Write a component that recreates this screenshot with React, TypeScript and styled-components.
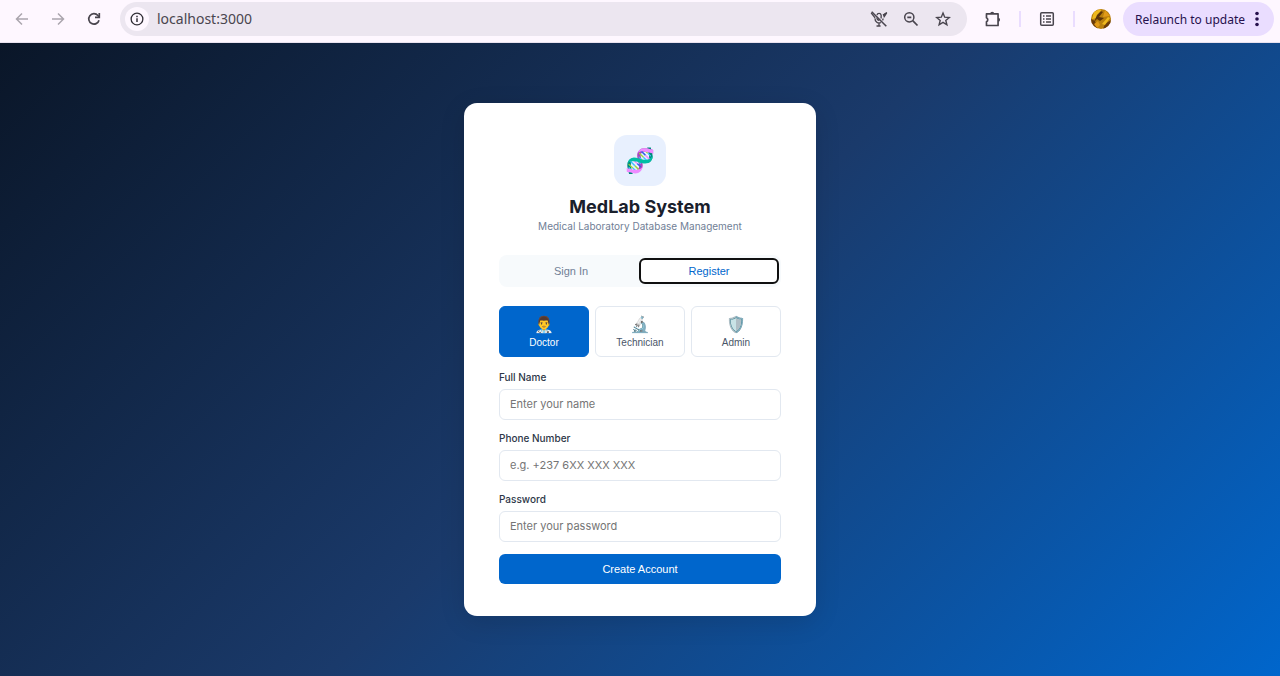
import React, { useState } from "react";
import styled, { createGlobalStyle } from "styled-components";

const GlobalStyle = createGlobalStyle`
  * { box-sizing: border-box; }
  html, body, #root { height: 100%; }
  body { margin: 0; font-family: Inter, sans-serif; }
  button, input { font: inherit; margin: 0; }
`;

const Page = styled.div`
  min-height: 100%;
  display: flex;
  flex-direction: column;
`;

const Toolbar = styled.header`
  display: flex;
  align-items: center;
  height: 43px;
  padding: 0 6px 4px 9px;
  background: #fef7ff;
  border-bottom: 1px solid #e9e2ef;
  color: #49454e;
  font-family: "Noto Sans", sans-serif;
`;

const IconButton = styled.button<{ $size?: number; $muted?: boolean }>`
  display: flex;
  align-items: center;
  justify-content: center;
  flex: none;
  width: ${(p) => p.$size ?? 32}px;
  height: 28px;
  padding: 0;
  border: 0;
  background: none;
  color: ${(p) => (p.$muted ? "#aba5ae" : "inherit")};
`;

const NavGroup = styled.nav`
  display: flex;
  gap: 10px;
  width: 111px;
  flex: none;
`;

const AddressBar = styled.div`
  display: flex;
  align-items: center;
  flex: 1;
  min-width: 0;
  height: 34px;
  padding: 0 8px 0 5px;
  border-radius: 17px;
  background: #ece6f0;
`;

const SiteInfo = styled.button`
  display: flex;
  align-items: center;
  justify-content: center;
  flex: none;
  width: 24px;
  height: 24px;
  padding: 0;
  border: 0;
  border-radius: 50%;
  background: #fef7ff;
  color: #322f37;
`;

const Url = styled.input`
  flex: 1;
  min-width: 0;
  padding: 0 8px;
  border: 0;
  background: none;
  outline: 0;
  color: #49454e;
  font-size: 14px;
  line-height: 20px;
`;

const Extensions = styled.div`
  display: flex;
  align-items: center;
  flex: none;
  padding: 0 6px 0 10px;
`;

const Separator = styled.span`
  width: 2px;
  height: 16px;
  margin: 0 10px;
  background: #eaddff;
`;

const Relaunch = styled.button`
  display: flex;
  align-items: center;
  gap: 9px;
  flex: none;
  height: 34px;
  padding: 0 14px 0 12px;
  border: 0;
  border-radius: 17px;
  background: #eaddff;
  color: #26104d;
  font-size: 12px;
  white-space: nowrap;
`;

const Backdrop = styled.main`
  flex: 1;
  display: flex;
  align-items: center;
  justify-content: center;
  padding: 32px 16px;
  background: linear-gradient(135deg, #0a1628 0%, #1a3a6b 50%, #0066cc 100%);
`;

const Card = styled.section`
  width: 100%;
  max-width: 352px;
  padding: 32px 35px;
  border-radius: 13px;
  background: #fff;
  box-shadow: 0 6px 26px rgba(0, 0, 0, 0.12);
`;

const Brand = styled.header`
  display: flex;
  flex-direction: column;
  align-items: center;
  margin-bottom: 22px;
`;

const Logo = styled.div`
  display: flex;
  align-items: center;
  justify-content: center;
  width: 52px;
  height: 51px;
  margin-bottom: 9px;
  border-radius: 13px;
  background: #e8f0fe;
  font-size: 24px;
  line-height: 28px;
`;

const Title = styled.h1`
  margin: 0;
  color: #1a202c;
  font-size: 18px;
  font-weight: 700;
  line-height: 24px;
`;

const Subtitle = styled.p`
  margin: 0;
  color: #718096;
  font-size: 10px;
  line-height: 14px;
`;

const Tabs = styled.div`
  display: grid;
  grid-template-columns: 1fr 1fr;
  margin-bottom: 19px;
  padding: 4px 3px;
  border-radius: 8px;
  background: #f7fafc;
`;

const Tab = styled.button<{ $active: boolean }>`
  height: 24px;
  padding: 0;
  border: 0;
  outline: ${(p) => (p.$active ? "2px solid #101010" : "0")};
  outline-offset: -1px;
  border-radius: 5px;
  background: ${(p) => (p.$active ? "#fff" : "none")};
  color: ${(p) => (p.$active ? "#0066cc" : "#718096")};
  font-family: "Liberation Sans", Arial, sans-serif;
  font-size: 11px;
`;

const Roles = styled.div`
  display: grid;
  grid-template-columns: repeat(3, 1fr);
  gap: 6px;
  margin-bottom: 13px;
`;

const Role = styled.button<{ $active: boolean }>`
  display: flex;
  flex-direction: column;
  align-items: center;
  gap: 1px;
  height: 51px;
  padding: 8px 0 0;
  border: 1px solid ${(p) => (p.$active ? "#0066cc" : "#e2e8f0")};
  border-radius: 6px;
  background: ${(p) => (p.$active ? "#0066cc" : "#fff")};
  color: ${(p) => (p.$active ? "#fff" : "#4a5568")};
  font-family: "Liberation Sans", Arial, sans-serif;
  font-size: 10px;
  line-height: 14px;
`;

const RoleIcon = styled.span`
  font-size: 16px;
  line-height: 20px;
`;

const Field = styled.div`
  display: flex;
  flex-direction: column;
  gap: 5px;
  margin-bottom: 11px;
`;

const Label = styled.label`
  color: #2d3748;
  font-size: 10px;
  font-weight: 500;
  line-height: 14px;
`;

const TextInput = styled.input`
  width: 100%;
  height: 31px;
  padding: 0 10px 2px;
  border: 1px solid #e2e8f0;
  border-radius: 6px;
  background: #fff;
  font-size: 11px;
  &::placeholder { color: #757575; opacity: 1; }
`;

const Submit = styled.button`
  display: block;
  width: 100%;
  height: 30px;
  margin-top: 12px;
  border: 0;
  border-radius: 6px;
  background: #0066cc;
  color: #fff;
  font-family: "Liberation Sans", Arial, sans-serif;
  font-size: 11px;
`;

const Svg = ({ size = 16, children }: { size?: number; children: React.ReactNode }) => (
  <svg width={size} height={size} viewBox="0 0 16 16" fill="none" stroke="currentColor" strokeWidth="1.5" aria-hidden="true">
    {children}
  </svg>
);

const roles = [
  { name: "Doctor", icon: "👨‍⚕️" },
  { name: "Technician", icon: "🔬" },
  { name: "Admin", icon: "🛡️" },
];

const fields = [
  { id: "name", label: "Full Name", type: "text", hint: "Enter your name" },
  { id: "phone", label: "Phone Number", type: "tel", hint: "e.g. +237 6XX XXX XXX" },
  { id: "password", label: "Password", type: "password", hint: "Enter your password" },
];

export default function App() {
  const [tab, setTab] = useState("Register");
  const [role, setRole] = useState("Doctor");
  return (
    <Page>
      <GlobalStyle />
      <Toolbar>
        <NavGroup>
          <IconButton $size={26} $muted aria-label="Back"><Svg><path d="M14 8H3M8 2.500 2.500 8 8 13.500" /></Svg></IconButton>
          <IconButton $size={26} $muted aria-label="Forward"><Svg><path d="M2 8h11M8 2.500 13.500 8 8 13.500" /></Svg></IconButton>
          <IconButton $size={26} aria-label="Reload"><Svg><path d="M13 9.200A5.200 5.200 0 1 1 11.900 4.500L13 5.600" strokeWidth="1.700" /><path d="M13.300 2v4.300H9" strokeWidth="1.700" /></Svg></IconButton>
        </NavGroup>
        <AddressBar>
          <SiteInfo aria-label="Site information">
            <Svg size={14}><circle cx="8" cy="8" r="6.700" /><path d="M8 7.200v4.300M8 4.300v1.600" strokeWidth="1.700" /></Svg>
          </SiteInfo>
          <Url aria-label="Address" defaultValue="localhost:3000" />
          <IconButton aria-label="Microphone blocked">
            <Svg size={18}>
              <path d="M1.500 1.500l13 13" strokeWidth="1.400" />
              <path d="M1 2.500l3.500 4.500M15 2.200l-3.300 2.600M14.800 2.500l-2.600 4M6.200 4.500a1.900 1.900 0 0 1 3.700 0v3M4.500 7.500a3.600 3.600 0 0 0 5.200 3.600M11.600 7.500a3.600 3.600 0 0 1-.5 1.800M8 11.500v2.500M5.800 14.200h3.600M6.200 7a1.900 1.900 0 0 0 2 2.100" strokeWidth="1.200" />
              <path d="M15 2l-3.800 2 1.500 2z" fill="currentColor" stroke="none" />
            </Svg>
          </IconButton>
          <IconButton aria-label="Zoom">
            <Svg><circle cx="6.300" cy="6.300" r="4.600" /><path d="M9.700 9.700l4.800 4.800M4.300 6.300h4" strokeWidth="1.700" /></Svg>
          </IconButton>
          <IconButton aria-label="Bookmark">
            <Svg><path d="M8 2l1.700 4.200 4.600.3-3.500 2.900 1.100 4.400L8 11.400l-3.900 2.400 1.100-4.400L1.700 6.500l4.600-.3z" strokeWidth="1.400" /></Svg>
          </IconButton>
        </AddressBar>
        <Extensions>
          <IconButton aria-label="Extensions">
            <Svg size={18}>
              <path d="M2.200 3.400h10.300v10.400H2.200v-3.400a2 2 0 0 0 0-3.600z" strokeLinejoin="round" />
              <path d="M5.500 3.400a1.800 1.800 0 0 1 3.600 0zM12.500 6.800a1.800 1.800 0 0 1 0 3.600z" fill="currentColor" stroke="none" />
            </Svg>
          </IconButton>
          <Separator />
          <IconButton aria-label="Reading list">
            <Svg><rect x="1.700" y="1.700" width="12.600" height="12.600" rx="1" /><path d="M4 5h1.500M4 8h1.500M4 11h1.500M7 5h5M7 8h5M7 11h5" /></Svg>
          </IconButton>
          <Separator />
          <IconButton aria-label="Profile">
            <svg width="20" height="20" viewBox="0 0 20 20" aria-hidden="true">
              <defs><clipPath id="avatar"><circle cx="10" cy="10" r="10" /></clipPath></defs>
              <g clipPath="url(#avatar)">
                <path fill="#b87f0c" d="M0 0h20v20H0z" />
                <path fill="#6b3c08" d="M0 10l4 2 3 8H0zM12 20l2-5 6-4v9z" />
                <path fill="#eeb81c" d="M3 3l6-3 2 3-5 6-5 1zM11 15l6-7 2 1-5 7z" />
                <path fill="#5c3408" d="M10 2l2 1-4 5 5 1-4 3-3-2-3 3 3-7z" />
                <path fill="#e09a18" d="M14 1l5 6-7 1zM3 15l4-3 2 4-3 3z" />
              </g>
            </svg>
          </IconButton>
        </Extensions>
        <Relaunch>
          Relaunch to update
          <svg width="6" height="16" viewBox="0 0 6 16" fill="currentColor" aria-hidden="true">
            <circle cx="3" cy="2.500" r="1.800" /><circle cx="3" cy="8" r="1.800" /><circle cx="3" cy="13.500" r="1.800" />
          </svg>
        </Relaunch>
      </Toolbar>
      <Backdrop>
        <Card>
          <Brand>
            <Logo>🧬</Logo>
            <Title>MedLab System</Title>
            <Subtitle>Medical Laboratory Database Management</Subtitle>
          </Brand>
          <Tabs role="tablist">
            {["Sign In", "Register"].map((name) => (
              <Tab key={name} role="tab" aria-selected={tab === name} $active={tab === name} onClick={() => setTab(name)}>{name}</Tab>
            ))}
          </Tabs>
          <Roles>
            {roles.map((r) => (
              <Role key={r.name} $active={role === r.name} aria-pressed={role === r.name} onClick={() => setRole(r.name)}>
                <RoleIcon>{r.icon}</RoleIcon>
                {r.name}
              </Role>
            ))}
          </Roles>
          <form onSubmit={(e) => e.preventDefault()}>
            {fields.map((f) => (
              <Field key={f.id}>
                <Label htmlFor={f.id}>{f.label}</Label>
                <TextInput id={f.id} type={f.type} placeholder={f.hint} />
              </Field>
            ))}
            <Submit type="submit">Create Account</Submit>
          </form>
        </Card>
      </Backdrop>
    </Page>
  );
}
